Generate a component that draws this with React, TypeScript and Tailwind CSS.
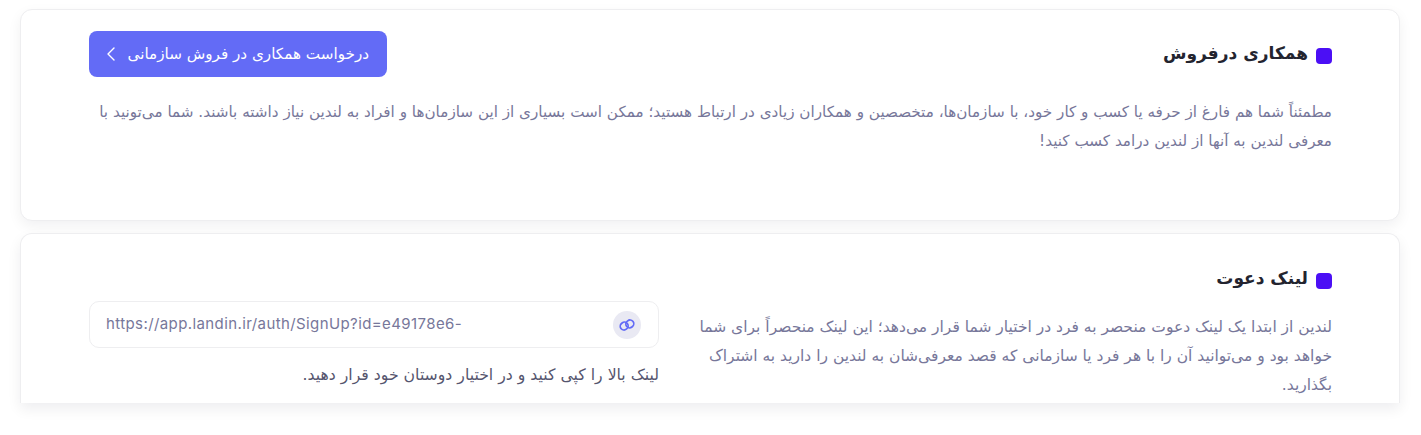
import { ChevronLeft } from "lucide-react";

const Title = ({ text }: { text: string }) => (
  <div className="flex items-center gap-2 text-[17px] leading-[30px] font-bold text-[#23242f]">
    <span className="mt-[6px] h-4 w-4 rounded-[4px] bg-[#4b0ff5]" />
    <h2>{text}</h2>
  </div>
);

export default function App() {
  return (
    <div
      dir="rtl"
      className="flex h-[435px] w-[1421px] flex-col gap-3 overflow-hidden bg-white pt-[9px] pr-[21px] pl-5 font-['DejaVu_Sans',sans-serif]"
    >
      <section className="h-[212px] shrink-0 rounded-xl border border-[#eeeef0] bg-white pt-[21px] pr-[67px] pl-[68px] shadow-[0_5px_14px_rgba(20,20,40,0.06)]">
        <div className="flex items-start justify-between">
          <div className="pt-[7px]">
            <Title text="همکاری درفروش" />
          </div>
          <button className="flex h-[46px] w-[298px] items-center justify-start gap-[5px] rounded-lg bg-[#636bf6] pr-[18px] text-[15.2px] text-white">
            <span>درخواست همکاری در فروش سازمانی</span>
            <ChevronLeft size={24} strokeWidth={1.4} />
          </button>
        </div>
        <p className="mt-[21px] text-[15.2px] leading-[29px] text-[#77779a]">
          مطمئناً شما هم فارغ از حرفه یا کسب و کار خود، با سازمان‌ها، متخصصین و همکاران زیادی در ارتباط هستید؛ ممکن است بسیاری از این سازمان‌ها و افراد به لندین نیاز داشته باشند. شما می‌تونید با معرفی لندین به آنها از لندین درامد کسب کنید!
        </p>
      </section>

      <section className="h-[170px] shrink-0 overflow-hidden rounded-t-xl border border-b-0 border-[#eeeef0] bg-white pt-[29px] pr-[67px] pl-[68px] shadow-[0_6px_14px_rgba(20,20,40,0.07)]">
        <Title text="لینک دعوت" />
        <div className="mt-[8px] flex justify-between">
          <p className="mt-[12px] w-[636px] text-[15.5px] leading-[29px] text-[#77779a]">
            لندین از ابتدا یک لینک دعوت منحصر به فرد در اختیار شما قرار می‌دهد؛ این لینک منحصراً برای شما خواهد بود و می‌توانید آن را با هر فرد یا سازمانی که قصد معرفی‌شان به لندین را دارید به اشتراک بگذارید.
          </p>
          <div className="w-[570px]">
            <div className="flex h-[47px] items-center justify-between rounded-[10px] border border-[#eeeef0] pr-[17px] pl-4">
              <span className="flex h-7 w-7 items-center justify-center rounded-full bg-[#e9e9f3] text-[#636bf6]">
                <svg width="18" height="18" viewBox="0 0 18 18" fill="none" stroke="currentColor" strokeWidth="1.7">
                  <rect x="2.2" y="6.4" width="8" height="7.4" rx="3.6" transform="rotate(-40 6.2 10.1)" />
                  <rect x="7.8" y="4.2" width="8" height="7.4" rx="3.6" transform="rotate(-40 11.8 7.9)" />
                </svg>
              </span>
              <span dir="ltr" className="font-['Inter',sans-serif] text-[15px] tracking-[0.4px] text-[#77779a]">
                https://app.landin.ir/auth/SignUp?id=e49178e6-
              </span>
            </div>
            <p className="mt-[12px] text-[15.7px] leading-[29px] text-[#55556e]">
              لینک بالا را کپی کنید و در اختیار دوستان خود قرار دهید.
            </p>
          </div>
        </div>
      </section>
    </div>
  );
}
